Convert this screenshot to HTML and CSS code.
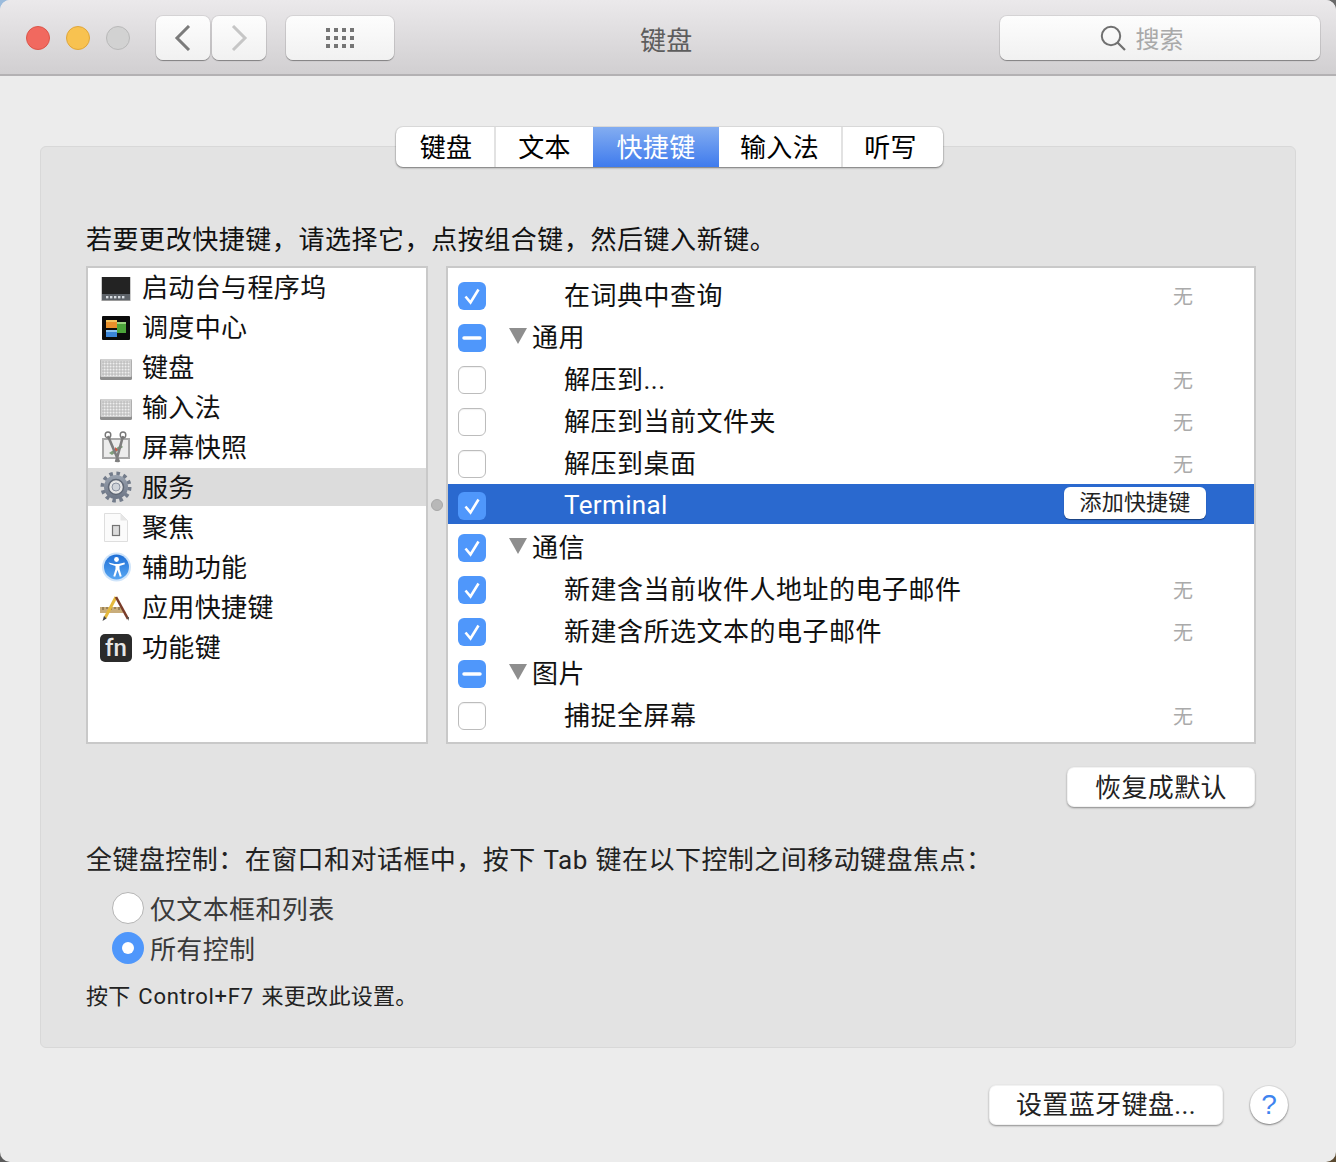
FILE: index.html
```html
<!DOCTYPE html>
<html lang="zh-CN">
<head>
<meta charset="utf-8">
<title>键盘</title>
<link rel="stylesheet" href="styles.css">
</head>
<body>
<svg class="defs" width="0" height="0">
  <defs>
    <pattern id="keys" width="3" height="3" patternUnits="userSpaceOnUse">
      <rect width="3" height="3" fill="#b4b4b4"/>
      <rect x="0.5" y="0.5" width="2.1" height="2.1" fill="#eeeeee"/>
    </pattern>
    <symbol id="kbd" viewBox="0 0 32 28">
      <rect x="0" y="6" width="32" height="21" rx="1.5" fill="#8f8f8f"/>
      <rect x="0.5" y="6" width="31" height="18" rx="1" fill="#d0d0d0"/>
      <rect x="2" y="8" width="28" height="15" fill="url(#keys)"/>
    </symbol>
    <linearGradient id="gear" x1="0" y1="0" x2="0" y2="1">
      <stop offset="0" stop-color="#9aa3b0"/>
      <stop offset="1" stop-color="#6c7585"/>
    </linearGradient>
    <linearGradient id="acc" x1="0" y1="0" x2="0" y2="1">
      <stop offset="0" stop-color="#1f6fd6"/>
      <stop offset="1" stop-color="#57a6f2"/>
    </linearGradient>
  </defs>
</svg>
<div class="window">
  <header class="titlebar">
    <div class="tools">
      <div class="lights">
        <span class="light red"></span><span class="light yellow"></span><span class="light gray"></span>
      </div>
      <div class="navs">
        <div class="tbtn nav"><svg width="20" height="26" viewBox="0 0 20 26"><path d="M16 1 4 13l12 12" fill="none" stroke="#7b7b7b" stroke-width="3"/></svg></div>
        <div class="tbtn nav"><svg width="20" height="26" viewBox="0 0 20 26"><path d="M4 1l12 12L4 25" fill="none" stroke="#c6c6c6" stroke-width="3"/></svg></div>
      </div>
      <div class="tbtn grid"><svg width="28" height="20" viewBox="0 0 28 20" fill="#757575"><rect x="0" y="0" width="4" height="4"/><rect x="8" y="0" width="4" height="4"/><rect x="16" y="0" width="4" height="4"/><rect x="24" y="0" width="4" height="4"/><rect x="0" y="8" width="4" height="4"/><rect x="8" y="8" width="4" height="4"/><rect x="16" y="8" width="4" height="4"/><rect x="24" y="8" width="4" height="4"/><rect x="0" y="16" width="4" height="4"/><rect x="8" y="16" width="4" height="4"/><rect x="16" y="16" width="4" height="4"/><rect x="24" y="16" width="4" height="4"/></svg></div>
    </div>
    <div class="title">键盘</div>
    <div class="search">
      <svg width="26" height="26" viewBox="0 0 26 26"><circle cx="11" cy="11" r="9.2" fill="none" stroke="#707070" stroke-width="2"/><path d="M17.5 17.5 25 25" stroke="#707070" stroke-width="2.2"/></svg>
      <span>搜索</span>
    </div>
  </header>

  <main class="content">
    <nav class="tabs">
      <span class="tab t1">键盘</span><span class="tab t2">文本</span><span class="tab t3 on">快捷键</span><span class="tab t4">输入法</span><span class="tab t5">听写</span>
    </nav>
    <section class="panel">
      <p class="intro">若要更改快捷键，请选择它，点按组合键，然后键入新键。</p>
      <div class="lists">
        <ul class="cats">
          <li class="cat"><span class="ico"><svg width="32" height="28" viewBox="0 0 32 28"><rect x="1.500" y="4" width="29" height="24" fill="#9a9a9a"/><rect x="2" y="4" width="28" height="17" fill="#232323"/><rect x="2" y="21" width="28" height="6" fill="#5d6268"/><g fill="#d8dde2"><rect x="6" y="23" width="2.400" height="2.400"/><rect x="10" y="23" width="2.400" height="2.400"/><rect x="14" y="23" width="2.400" height="2.400"/><rect x="18" y="23" width="2.400" height="2.400"/><rect x="22" y="23" width="2.400" height="2.400"/></g></svg></span>启动台与程序坞</li>
          <li class="cat"><span class="ico"><svg width="32" height="28" viewBox="0 0 32 28"><rect x="2" y="3" width="28" height="24" rx="1" fill="#0b0b0b"/><rect x="6" y="7" width="11" height="8" fill="#e8902c"/><rect x="6" y="7" width="11" height="2" fill="#f3c35d"/><rect x="6" y="17" width="11" height="7" fill="#3b86d8"/><rect x="6" y="17" width="11" height="2" fill="#8cc4f2"/><rect x="17" y="9" width="9" height="11" fill="#4ca43a"/><rect x="17" y="9" width="9" height="2" fill="#9ad27f"/></svg></span>调度中心</li>
          <li class="cat"><span class="ico"><svg width="32" height="28"><use href="#kbd"/></svg></span>键盘</li>
          <li class="cat"><span class="ico"><svg width="32" height="28"><use href="#kbd"/></svg></span>输入法</li>
          <li class="cat"><span class="ico"><svg width="32" height="32" viewBox="0 0 32 32"><rect x="3" y="8" width="26" height="19" fill="#ececec" stroke="#a8a8a8" stroke-width="2"/><path d="M9 22 21 14l2 2-11 8z" fill="#7f9d7a"/><path d="M15 16l3 3-3 2z" fill="#d2574a"/><path d="M8 5 19 31M23 5 16 31" stroke="#7e7e7e" stroke-width="2.600" fill="none"/><ellipse cx="8" cy="4" rx="2.800" ry="3" fill="none" stroke="#777" stroke-width="1.400"/><ellipse cx="23" cy="4" rx="2.800" ry="3" fill="none" stroke="#777" stroke-width="1.400"/></svg></span>屏幕快照</li>
          <li class="cat sel"><span class="ico"><svg width="32" height="32" viewBox="0 0 32 32"><circle class="teeth" cx="16" cy="16" r="13.500"/><circle cx="16" cy="16" r="12" fill="url(#gear)"/><circle cx="16" cy="16" r="7.500" fill="#e6e6e6" stroke="#5f6775" stroke-width="1.500"/><circle cx="16" cy="16" r="4" fill="#cfd3d9" stroke="#8a92a0"/></svg></span>服务</li>
          <li class="cat"><span class="ico"><svg width="32" height="32" viewBox="0 0 32 32"><path d="M4.500 2.500h16l7 7v21h-23z" fill="#fbfbfb" stroke="#dedede"/><path d="M20.500 2.500v7h7z" fill="#e6e6e6"/><rect x="12.500" y="14.500" width="7" height="10" fill="#dcdcdc" stroke="#747474" stroke-width="1.200"/></svg></span>聚焦</li>
          <li class="cat"><span class="ico"><svg width="32" height="30" viewBox="0 0 32 30"><circle cx="16.500" cy="15" r="14.500" fill="#cfe4fa"/><circle cx="16.500" cy="15" r="12.500" fill="url(#acc)"/><circle cx="16.500" cy="7.500" r="2.400" fill="#fff"/><path d="M8.500 10.500l6 1.500h4l6-1.500.4 1.700-5.400 1.800v3l2.200 7.200-1.900.6-2.300-6.800-2.300 6.800-1.900-.6 2.200-7.200v-3l-5.400-1.800z" fill="#fff"/></svg></span>辅助功能</li>
          <li class="cat"><span class="ico"><svg width="32" height="30" viewBox="0 0 32 30"><path d="M0 15h23v6H0z" fill="#c9ad7b"/><path d="M3 15v3M7 15v2M11 15v3M15 15v2M19 15v3" stroke="#6e5a35"/><path d="M16 5 5 26" stroke="#e5b93c" stroke-width="3"/><path d="M16 5 28 27" stroke="#7a3d2a" stroke-width="2.600"/><path d="M4 24 2.500 29l4-2.500z" fill="#444"/><path d="M27 25l1.500 4 .5-4z" fill="#555"/></svg></span>应用快捷键</li>
          <li class="cat"><span class="ico"><span class="fn">fn</span></span>功能键</li>
        </ul>
        <div class="splitter"><span class="dot"></span></div>
        <ul class="shortcuts">
          <li class="row"><span class="box on"><svg width="28" height="28" viewBox="0 0 28 28"><path d="M7.500 14.500l5 6 8-13" fill="none" stroke="#fff" stroke-width="2.600"/></svg></span><span class="name">在词典中查询</span><span class="none">无</span></li>
          <li class="row"><span class="box on"><svg width="28" height="28" viewBox="0 0 28 28"><path d="M6 14h16" stroke="#fff" stroke-width="3.500" stroke-linecap="round"/></svg></span><span class="tri"></span><span class="group">通用</span></li>
          <li class="row"><span class="box"></span><span class="name">解压到...</span><span class="none">无</span></li>
          <li class="row"><span class="box"></span><span class="name">解压到当前文件夹</span><span class="none">无</span></li>
          <li class="row"><span class="box"></span><span class="name">解压到桌面</span><span class="none">无</span></li>
          <li class="row active"><span class="box on"><svg width="28" height="28" viewBox="0 0 28 28"><path d="M7.500 14.500l5 6 8-13" fill="none" stroke="#fff" stroke-width="2.600"/></svg></span><span class="name">Terminal</span><span class="add">添加快捷键</span></li>
          <li class="row"><span class="box on"><svg width="28" height="28" viewBox="0 0 28 28"><path d="M7.500 14.500l5 6 8-13" fill="none" stroke="#fff" stroke-width="2.600"/></svg></span><span class="tri"></span><span class="group">通信</span></li>
          <li class="row"><span class="box on"><svg width="28" height="28" viewBox="0 0 28 28"><path d="M7.500 14.500l5 6 8-13" fill="none" stroke="#fff" stroke-width="2.600"/></svg></span><span class="name">新建含当前收件人地址的电子邮件</span><span class="none">无</span></li>
          <li class="row"><span class="box on"><svg width="28" height="28" viewBox="0 0 28 28"><path d="M7.500 14.500l5 6 8-13" fill="none" stroke="#fff" stroke-width="2.600"/></svg></span><span class="name">新建含所选文本的电子邮件</span><span class="none">无</span></li>
          <li class="row"><span class="box on"><svg width="28" height="28" viewBox="0 0 28 28"><path d="M6 14h16" stroke="#fff" stroke-width="3.500" stroke-linecap="round"/></svg></span><span class="tri"></span><span class="group">图片</span></li>
          <li class="row"><span class="box"></span><span class="name">捕捉全屏幕</span><span class="none">无</span></li>
        </ul>
      </div>
      <div class="restore-line"><span class="btn restore">恢复成默认</span></div>
      <p class="kbd-line">全键盘控制：在窗口和对话框中，按下 Tab 键在以下控制之间移动键盘焦点：</p>
      <div class="radios">
        <div class="radio-row"><span class="radio"></span>仅文本框和列表</div>
        <div class="radio-row"><span class="radio on"></span>所有控制</div>
      </div>
      <p class="hint">按下 <span class="latin">Control+F7</span> 来更改此设置。</p>
    </section>
    <footer class="foot">
      <span class="btn bt">设置蓝牙键盘...</span>
      <span class="help">?</span>
    </footer>
  </main>
</div>
</body>
</html>
```
FILE: styles.css
```css
* { box-sizing: border-box; }
html, body { margin: 0; padding: 0; }
body {
  width: 1336px;
  height: 1162px;
  overflow: hidden;
  background: conic-gradient(#6a6a6a 0 90deg, #5a4a30 90deg 180deg, #5b5b5b 180deg 270deg, #9bbbdc 270deg);
  font-family: Roboto, "Noto Sans CJK SC", sans-serif;
  color: #000;
}
.defs { position: absolute; }
.window {
  width: 1336px;
  height: 1162px;
  background: #ececec;
  border-radius: 10px;
  overflow: hidden;
  display: flex;
  flex-direction: column;
}
.titlebar {
  height: 76px;
  flex: none;
  display: grid;
  grid-template-columns: 1fr auto 1fr;
  align-items: center;
  padding: 0 15px;
  background: linear-gradient(#ebe9eb, #d1cfd1);
  border-bottom: 2px solid #b3b1b3;
}
.tools { display: flex; align-items: center; margin-top: 1px; }
.lights { display: flex; gap: 16px; margin-left: 11px; margin-right: 26px; }
.light { width: 24px; height: 24px; border-radius: 50%; border: 1px solid; }
.red { background: #f1695f; border-color: #dc5549; }
.yellow { background: #f8c250; border-color: #e0a63a; }
.gray { background: #d2d2d2; border-color: #b9b9b9; }
.navs { display: flex; gap: 2px; margin-right: 20px; }
.tbtn, .search {
  height: 44px;
  border-radius: 7px;
  background: linear-gradient(#fdfdfd, #f1f1f1);
  box-shadow: 0 1px 1px rgba(0,0,0,.35), 0 0 0 1px rgba(0,0,0,.07);
  display: flex;
  align-items: center;
  justify-content: center;
}
.nav { width: 54px; }
.grid { width: 108px; }
.title { width: 56px; padding-right: 4px; font-size: 26px; letter-spacing: .3px; color: #5d5d5d; line-height: 36px; white-space: nowrap; margin-top: 8px; }
.search { width: 320px; margin-left: auto; margin-right: 1px; margin-top: 1px; gap: 10px; padding-right: 37px; }
.search span { font-size: 24px; color: #a9a9a9; }

.content { flex: 1; padding: 51px 40px 0; display: flex; flex-direction: column; }
.tabs {
  align-self: center;
  display: flex;
  height: 40px;
  margin-left: 3px;
  background: #fff;
  border-radius: 7px;
  box-shadow: 0 1px 2px rgba(0,0,0,.45), 0 0 0 1px rgba(0,0,0,.06);
  position: relative;
  z-index: 1;
  overflow: hidden;
}
.tab {
  font-size: 26px;
  line-height: 42px;
  text-align: center;
  border-right: 2px solid #e2e2e2;
  letter-spacing: .3px;
}
.t1 { width: 100px; padding-left: 2px; }
.t2 { width: 97px; border-right: 0; }
.t3 { width: 126px; border-right: 0; }
.t4 { width: 124px; padding-right: 1px; }
.t5 { width: 100px; padding-right: 5px; border-right: 0; }
.on.tab { background: linear-gradient(#83adf1, #3f7bed); color: #fff; }
.panel {
  height: 902px;
  margin-top: -21px;
  padding: 0 39px 0 46px;
  background: #e3e3e3;
  border: 1px solid #d8d8d8;
  border-radius: 6px;
  display: flex;
  flex-direction: column;
}
.intro { margin: 73px 0 0 -1px; font-size: 26px; line-height: 40px; letter-spacing: .55px; white-space: nowrap; color: #111; }
.lists { display: flex; height: 478px; margin-top: 6px; margin-left: -1px; }
.cats, .shortcuts {
  list-style: none;
  margin: 0;
  background: #fff;
  border: 2px solid #c9c9c9;
}
.cats { width: 342px; padding: 0; display: flex; flex-direction: column; gap: 2px; }
.cat {
  height: 38px;
  padding-bottom: 4px;
  display: flex;
  align-items: center;
  font-size: 26px;
  letter-spacing: .37px;
  white-space: nowrap;
  color: #111;
}
.cat.sel { background: #dcdcdc; }
.ico { width: 54px; padding-left: 12px; height: 38px; margin-top: 4px; display: flex; align-items: center; justify-content: flex-start; }
.ico svg { display: block; flex: none; }
.teeth { fill: none; stroke: #737c8b; stroke-width: 4; stroke-dasharray: 3.500 3.569; }
.fn {
  display: block;
  width: 32px;
  height: 28px;
  margin-top: 2px;
  border-radius: 5px;
  background: #2b2b2b;
  color: #e6e6e6;
  font: 500 24px/28px Roboto, sans-serif;
  text-align: center;
  letter-spacing: 0;
}
.splitter { width: 18px; display: flex; align-items: center; justify-content: center; }
.dot { width: 12px; height: 12px; border-radius: 50%; background: #b8b8b8; border: 1px solid #a8a8a8; }
.shortcuts { flex: 1; padding: 6px 0 0; display: flex; flex-direction: column; gap: 2px; overflow: hidden; }
.row { height: 40px; display: flex; align-items: center; padding-left: 10px; font-size: 26px; letter-spacing: .5px; white-space: nowrap; color: #111; }
.box {
  width: 28px;
  height: 28px;
  flex: none;
  margin-top: 4px;
  border-radius: 6px;
  background: #fff;
  border: 1px solid #bcbcbc;
  box-shadow: inset 0 1px 1px rgba(0,0,0,.06);
}
.box svg { display: block; }
.box.on { background: #4f97fb; border: 0; box-shadow: none; }
.tri {
  width: 0;
  height: 0;
  margin-left: 23px;
  margin-right: 5px;
  border-left: 9px solid transparent;
  border-right: 9px solid transparent;
  border-top: 16px solid #8e8e8e;
}
.name { margin-left: 78px; margin-top: -2px; }
.group { margin-top: -2px; }
.none { margin-left: auto; margin-right: 61px; margin-top: 2px; font-size: 20px; color: #aaa; letter-spacing: 0; }
.active { background: #2a69cf; color: #fff; }
.active .name { margin-top: 2px; letter-spacing: .37px; }
.add {
  margin-left: auto;
  margin-right: 48px;
  margin-bottom: 2px;
  width: 142px;
  height: 32px;
  border-radius: 6px;
  background: #fff;
  color: #222;
  font-size: 22px;
  line-height: 31px;
  text-align: center;
  letter-spacing: .2px;
  box-shadow: 0 1px 1px rgba(0,0,0,.4);
}
.btn {
  display: flex;
  align-items: center;
  justify-content: center;
  height: 40px;
  padding-bottom: 4px;
  border-radius: 7px;
  background: #fff;
  box-shadow: 0 1px 2px rgba(0,0,0,.4), inset 0 0 0 1px rgba(0,0,0,.05);
  font-size: 26px;
  letter-spacing: .4px;
  color: #222;
}
.restore-line { display: flex; justify-content: flex-end; margin-top: 23px; padding-right: 1px; }
.restore { width: 188px; }
.kbd-line { margin: 33px 0 0 -1px; font-size: 26px; line-height: 40px; letter-spacing: .45px; word-spacing: 1px; white-space: nowrap; color: #222; }
.radios { margin: 10px 0 0 25px; display: flex; flex-direction: column; gap: 8px; }
.radio-row { display: flex; align-items: center; gap: 6px; height: 32px; padding-top: 2px; font-size: 26px; letter-spacing: .37px; color: #3a3a3a; }
.radio { width: 32px; height: 32px; margin-top: 2px; border-radius: 50%; background: #fff; border: 1px solid #b5b5b5; }
.radio.on { background: #4f97fb; border: 0; display: flex; align-items: center; justify-content: center; }
.radio.on::after { content: ""; width: 12px; height: 12px; border-radius: 50%; background: #fff; }
.hint { margin: 19px 0 0 -1px; font-size: 22px; line-height: 32px; letter-spacing: .3px; word-spacing: 2px; white-space: nowrap; color: #222; }
.latin { letter-spacing: .7px; }
.foot { display: flex; justify-content: flex-end; align-items: center; gap: 27px; margin-top: 37px; padding-right: 8px; }
.bt { width: 234px; padding-bottom: 6px; }
.help {
  width: 38px;
  height: 38px;
  border-radius: 50%;
  background: #fff;
  box-shadow: 0 1px 2px rgba(0,0,0,.45), 0 0 0 1px rgba(0,0,0,.05);
  color: #3f84ef;
  font: 28px/38px "Liberation Sans", sans-serif;
  text-align: center;
}
```
